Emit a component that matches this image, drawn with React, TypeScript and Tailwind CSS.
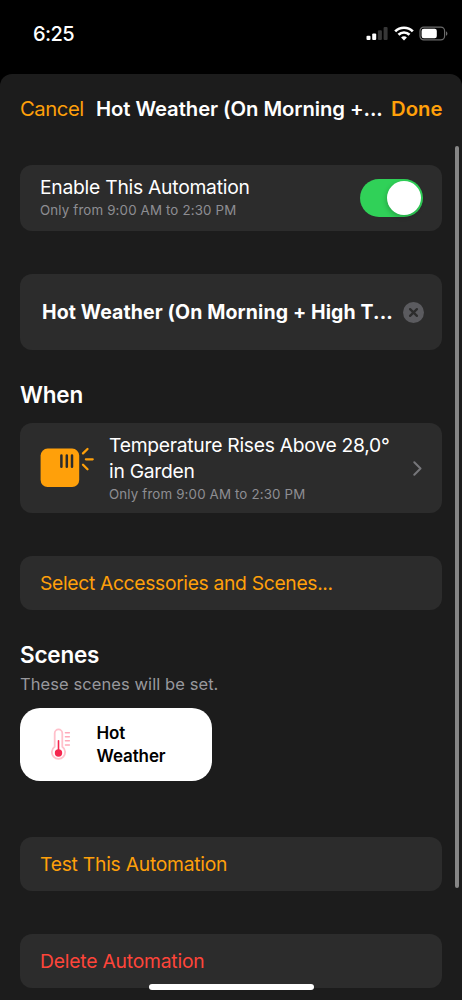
import React, { useState } from 'react';

const StatusBar: React.FC = () => (
    <div className="flex h-[74px] shrink-0 items-start justify-between pl-[33px] pr-[14px]">
        <span className="mt-[20px] text-[20px] leading-[28px] font-medium tracking-[-0.6px]">6:25</span>
        <div className="mt-[26px] flex items-center">
            <svg width="22" height="15" viewBox="0 0 22 15">
                <rect x="0.5" y="9.7" width="4" height="4.3" rx="1.1" fill="#fff" />
                <rect x="6.2" y="7.5" width="4" height="6.5" rx="1.1" fill="#fff" />
                <rect x="11.9" y="4.3" width="4" height="9.7" rx="1.1" fill="#373737" />
                <rect x="17.6" y="1" width="4" height="13" rx="1.1" fill="#373737" />
            </svg>
            <svg className="ml-[6px]" width="20" height="15" viewBox="0 0 20 15" fill="none" stroke="#fff" strokeWidth="2.7">
                <path d="M1.2 5.4a12.4 12.4 0 0 1 17.6 0" />
                <path d="M4.5 8.8a7.7 7.7 0 0 1 11 0" />
                <path d="M10 14.4 7.1 11.4a4 4 0 0 1 5.8 0z" fill="#fff" stroke="none" />
            </svg>
            <svg className="ml-[5px]" width="29" height="15" viewBox="0 0 29 15">
                <rect x="1" y="1.1" width="24.6" height="12.8" rx="3.8" fill="none" stroke="#6b6b6b" strokeWidth="1.2" />
                <rect x="2.6" y="2.8" width="15.2" height="9.4" rx="2.2" fill="#fff" />
                <path d="M27 5.2c1.9.8 1.9 3.8 0 4.6z" fill="#6b6b6b" />
            </svg>
        </div>
    </div>
);

const SensorIcon: React.FC = () => (
    <svg width="56" height="42" viewBox="0 0 56 42" className="shrink-0">
        <rect x="0.6" y="1.6" width="38.6" height="38.4" rx="7" fill="#ffa00a" />
        <g stroke="#2c2c2c" strokeWidth="2.5" strokeLinecap="round">
            <path d="M21.4 8.4v11.4M26.8 8.4v11.4M32 8.4v11.4" />
        </g>
        <g stroke="#ffa00a" strokeWidth="2.3" strokeLinecap="round">
            <path d="M43 6.4 47.5 2M45.9 12.3h6.8M43 17.8l4.5 4.4" />
        </g>
    </svg>
);

const ThermometerIcon: React.FC = () => (
    <svg width="20" height="33" viewBox="0 0 20 33" fill="none" className="shrink-0">
        <path d="M3.7 18.8V5.2a3.8 3.8 0 0 1 7.6 0v13.6a6.6 6.6 0 1 1-7.6 0z" stroke="#ffc0cb" strokeWidth="1.8" />
        <path d="M7.5 12.8v12" stroke="#f5274f" strokeWidth="1.6" strokeLinecap="round" />
        <circle cx="7.5" cy="25" r="3.7" fill="#f5274f" />
        <path d="M14.4 4.7h4M14.4 8.8h4M14.4 12.8h4M14.4 17h4" stroke="#ffa9b9" strokeWidth="1.4" strokeLinecap="round" />
    </svg>
);

const card = 'flex shrink-0 items-center rounded-[12px] bg-[#2c2c2c]';

const App: React.FC = () => {
    const [enabled, setEnabled] = useState(true);

    return (
        <div className="relative flex h-[1000px] w-[462px] flex-col overflow-hidden bg-black font-['Inter','Liberation_Sans',sans-serif] whitespace-nowrap text-white">
            <StatusBar />
            <div className="flex flex-1 flex-col rounded-t-[12px] bg-[#1c1c1c] px-[20px]">
                <header className="mt-[20px] flex h-[29px] shrink-0 items-center text-[20.3px] leading-[29px]">
                    <button className="w-[76px] shrink-0 text-left tracking-[-0.45px] text-[#ffa00a]">Cancel</button>
                    <h1 className="w-[295px] shrink-0 font-semibold tracking-[-0.08px]">Hot Weather (On Morning +...</h1>
                    <button className="font-semibold text-[#ffa00a]">Done</button>
                </header>

                <section className={`${card} mt-[42px] h-[66px] pl-[20px] pr-[19.5px]`}>
                    <div className="flex-1 pb-[2px]">
                        <p className="text-[19.3px] leading-[25px] tracking-[-0.25px]">Enable This Automation</p>
                        <p className="text-[13.3px] leading-[20px] tracking-[0.16px] text-[#8e8e93]">Only from 9:00 AM to 2:30 PM</p>
                    </div>
                    <button
                        onClick={() => setEnabled(!enabled)}
                        className={`flex h-[38px] w-[63px] items-center rounded-full px-[2px] ${enabled ? 'justify-end bg-[#30d158]' : 'justify-start bg-[#48484a]'}`}
                    >
                        <span className="size-[34px] rounded-full bg-white shadow-[-1px_2px_5px_rgba(0,0,0,0.2)]" />
                    </button>
                </section>

                <section className={`${card} mt-[43px] h-[76px] pl-[22px] pr-[18px]`}>
                    <span className="flex-1 pt-[2px] text-[19.5px] font-bold tracking-[0.12px]">Hot Weather (On Morning + High T...</span>
                    <svg width="21" height="21" viewBox="0 0 21 21">
                        <circle cx="10.5" cy="10.5" r="10.5" fill="#5b5b5f" />
                        <path d="m7.1 7.1 6.8 6.8M13.9 7.1l-6.8 6.8" stroke="#2c2c2c" strokeWidth="2.3" strokeLinecap="round" />
                    </svg>
                </section>

                <h2 className="mt-[30px] text-[22.5px] leading-[30px] font-semibold tracking-[-0.2px]">When</h2>
                <section className={`${card} mt-[13px] h-[90px] pl-[20px] pr-[20px]`}>
                    <SensorIcon />
                    <div className="ml-[13px] flex-1 pb-[1px]">
                        <p className="text-[19.3px] leading-[26px] tracking-[-0.27px]">Temperature Rises Above 28,0°<br />in Garden</p>
                        <p className="text-[13.3px] leading-[20px] tracking-[0.16px] text-[#8e8e93]">Only from 9:00 AM to 2:30 PM</p>
                    </div>
                    <svg width="9" height="15" viewBox="0 0 9 15" fill="none">
                        <path d="m1.3 1.3 6.2 6.2-6.2 6.2" stroke="#76767a" strokeWidth="2" strokeLinecap="round" strokeLinejoin="round" />
                    </svg>
                </section>

                <button className={`${card} mt-[43px] h-[54px] px-[20px] pt-[1px] text-[19.3px] tracking-[-0.33px] text-[#ffa00a]`}>
                    Select Accessories and Scenes...
                </button>

                <h2 className="mt-[30px] text-[22.5px] leading-[30px] font-semibold tracking-[-0.2px]">Scenes</h2>
                <p className="mt-[2px] text-[16.5px] leading-[24px] tracking-[0.08px] text-[#98989d]">These scenes will be set.</p>
                <section className="mt-[12px] flex h-[73px] w-[192px] shrink-0 items-center rounded-[20px] bg-white pl-[31px] text-black">
                    <ThermometerIcon />
                    <p className="ml-[25.5px] pt-[1px] text-[17px] leading-[23px] font-semibold tracking-[-0.1px]">Hot<br />Weather</p>
                </section>

                <button className={`${card} mt-[56px] h-[54px] px-[20px] pt-[1px] text-[19.3px] tracking-[-0.25px] text-[#ffa00a]`}>
                    Test This Automation
                </button>
                <button className={`${card} mt-[43px] h-[54px] px-[20px] pt-[1px] text-[19.3px] tracking-[-0.2px] text-[#ff453a]`}>
                    Delete Automation
                </button>
            </div>

            {/* scroll thumb and home indicator float over the sheet */}
            <div className="absolute top-[146px] right-[3.5px] h-[742px] w-[4px] rounded-full bg-[#868686]" />
            <div className="absolute bottom-[10px] left-[148.5px] h-[6px] w-[165px] rounded-full bg-white" />
        </div>
    );
};

export default App;
